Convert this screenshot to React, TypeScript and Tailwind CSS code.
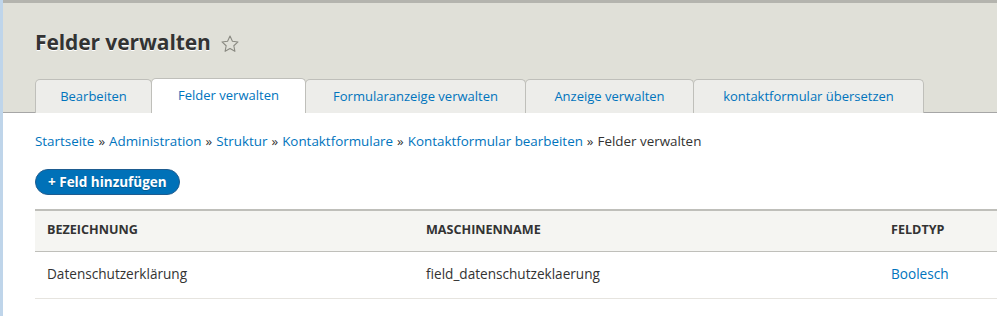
const tabs = [
  { label: "Bearbeiten", w: "w-[117px]" },
  { label: "Felder verwalten", w: "w-[155px]", active: true },
  { label: "Formularanzeige verwalten", w: "w-[221px]" },
  { label: "Anzeige verwalten", w: "w-[169px]" },
  { label: "kontaktformular übersetzen", w: "w-[231px]" },
];

const crumbs = [
  "Startseite",
  "Administration",
  "Struktur",
  "Kontaktformulare",
  "Kontaktformular bearbeiten",
];

function Star() {
  return (
    <svg width="20" height="20" viewBox="0 0 24 24" className="ml-[9px] mt-[2px]">
      <path
        d="M12 2.5l2.9 6.2 6.7.8-5 4.6 1.3 6.7L12 17.5l-5.9 3.3 1.3-6.7-5-4.6 6.7-.8z"
        fill="none"
        stroke="#8a8a82"
        strokeWidth="1.3"
        strokeLinejoin="round"
      />
    </svg>
  );
}

export default function App() {
  return (
    <div className="w-[997px] h-[316px] overflow-hidden bg-white font-['Open_Sans',sans-serif] text-[#333] border-l-[3px] border-[#bfd5ea]">
      <header className="bg-[#e0e0d8] border-t-[3px] border-[#b4b4ae] border-b border-b-[#a6a6a6] pl-[32px]">
        <div className="flex items-center h-[75px] pt-[4px]">
          <h1 className="text-[21px] font-bold tracking-[-0.1px] [text-shadow:0_1px_0_#fff]">Felder verwalten</h1>
          <Star />
        </div>
        <nav className="flex h-[34px] items-end">
          {tabs.map((t) => (
            <a
              key={t.label}
              className={`${t.w} h-[34px] -mb-px flex items-center justify-center rounded-t-[5px] border border-b-0 border-[#bfbfba] text-[13px] text-[#0074bd] ${
                t.active ? "bg-white h-[35px] relative z-10" : "bg-[#ededea]"
              } -ml-px first:ml-0`}
            >
              {t.label}
            </a>
          ))}
        </nav>
      </header>

      <div className="pl-[32px]">
        <div className="mt-[18px] text-[13.4px] flex items-center">
          {crumbs.map((c) => (
            <span key={c}>
              <a className="text-[#0074bd]">{c}</a>
              <span className="mx-[4px]">»</span>
            </span>
          ))}
          <span>Felder verwalten</span>
        </div>

        <button className="mt-[18px] h-[26px] px-[12px] rounded-full bg-[#0071b8] border border-[#1e5c90] text-white text-[13.5px] font-bold flex items-center [text-shadow:0_1px_0_#005a92]">
          + Feld hinzufügen
        </button>

        <table className="mt-[14px] w-[1000px] border-collapse text-left">
          <thead>
            <tr className="bg-[#f5f5f2] border-t-2 border-b border-[#bfbfba] h-[41px]">
              <th className="w-[379px] pl-[12px] text-[12.6px] font-bold uppercase">Bezeichnung</th>
              <th className="w-[465px] pl-[12px] text-[12.6px] font-bold uppercase">Maschinenname</th>
              <th className="pl-[12px] text-[12.6px] font-bold uppercase">Feldtyp</th>
            </tr>
          </thead>
          <tbody>
            <tr className="h-[47px] border-b border-[#e6e4df] text-[13.6px]">
              <td className="pl-[12px]">Datenschutzerklärung</td>
              <td className="pl-[12px]">field_datenschutzeklaerung</td>
              <td className="pl-[12px]">
                <a className="text-[#0074bd]">Boolesch</a>
              </td>
            </tr>
          </tbody>
        </table>
      </div>
    </div>
  );
}
